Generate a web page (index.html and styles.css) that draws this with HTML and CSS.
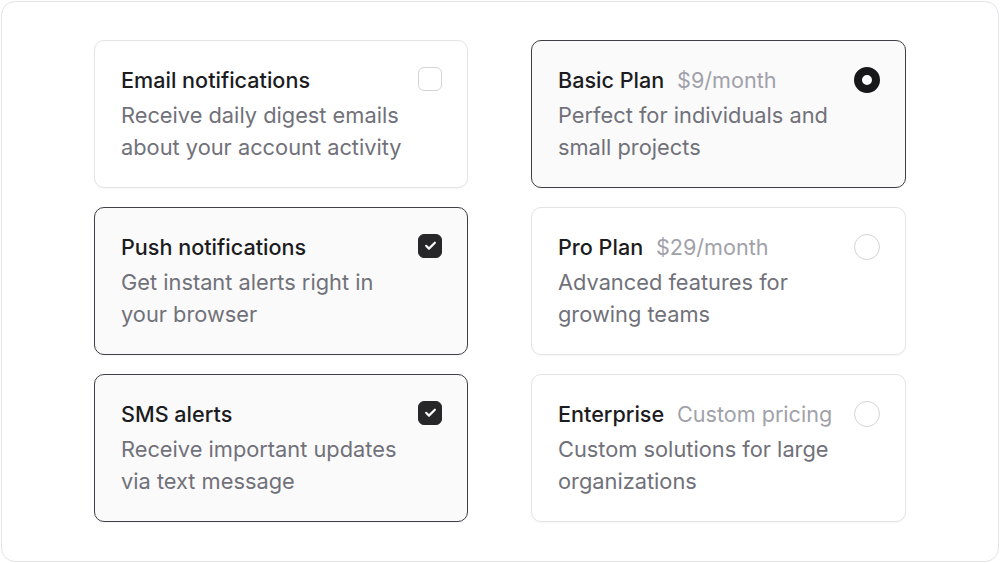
FILE: index.html
```html
<!DOCTYPE html>
<html>
<head>
<meta charset="utf-8">
<link rel="stylesheet" href="styles.css">
</head>
<body>
<div class="frame">
  <div class="grid">
    <div class="card">
      <div class="body">
        <div class="title">Email notifications</div>
        <div class="desc">Receive daily digest emails about your account activity</div>
      </div>
      <span class="check"></span>
    </div>
    <div class="card on">
      <div class="body">
        <div class="title">Basic Plan <span class="price">$9/month</span></div>
        <div class="desc">Perfect for individuals and small projects</div>
      </div>
      <span class="radio on"></span>
    </div>
    <div class="card on">
      <div class="body">
        <div class="title">Push notifications</div>
        <div class="desc">Get instant alerts right in your browser</div>
      </div>
      <span class="check on"><svg viewBox="0 0 24 24" width="15" height="15"><path d="M5 12.5l4.5 4.5L19 7.5" fill="none" stroke="#fff" stroke-width="3.4" stroke-linecap="round" stroke-linejoin="round"/></svg></span>
    </div>
    <div class="card">
      <div class="body">
        <div class="title">Pro Plan <span class="price">$29/month</span></div>
        <div class="desc">Advanced features for growing teams</div>
      </div>
      <span class="radio"></span>
    </div>
    <div class="card on">
      <div class="body">
        <div class="title">SMS alerts</div>
        <div class="desc">Receive important updates via text message</div>
      </div>
      <span class="check on"><svg viewBox="0 0 24 24" width="15" height="15"><path d="M5 12.5l4.5 4.5L19 7.5" fill="none" stroke="#fff" stroke-width="3.4" stroke-linecap="round" stroke-linejoin="round"/></svg></span>
    </div>
    <div class="card">
      <div class="body">
        <div class="title">Enterprise <span class="price">Custom pricing</span></div>
        <div class="desc">Custom solutions for large organizations</div>
      </div>
      <span class="radio"></span>
    </div>
  </div>
</div>
</body>
</html>
```

FILE: styles.css
```css
* { box-sizing: border-box; }
html, body { margin: 0; padding: 0; background: #fff; }
body {
  font-family: Inter, "Noto Sans", sans-serif;
  padding: 1px;
  width: 1000px;
  height: 563px;
}
.frame {
  width: 998px;
  height: 561px;
  border: 1px solid #e4e4e7;
  border-radius: 14px;
  display: flex;
  align-items: center;
  justify-content: center;
}
.grid {
  display: grid;
  grid-template-columns: 374px 375px;
  grid-auto-rows: 148px;
  column-gap: 63px;
  row-gap: 19px;
  margin-top: -2px;
}
.card {
  border: 1px solid #e4e4e7;
  border-radius: 10px;
  background: #fff;
  padding: 23px 25px 22px 26px;
  display: flex;
  justify-content: space-between;
  align-items: flex-start;
  box-shadow: 0 1px 2px rgba(0,0,0,0.04);
}
.card.on {
  border-color: #3f3f46;
  background: #fafafa;
}
.title {
  font-size: 21.6px;
  line-height: 32px;
  font-weight: 500;
  color: #1c1c1f;
}
.price {
  font-weight: 400;
  color: #a1a1aa;
  margin-left: 7px;
}
.desc {
  margin-top: 3px;
  font-size: 21.8px;
  line-height: 32px;
  color: #71717a;
  max-width: 292px;
}
.check {
  flex: none;
  width: 24px;
  height: 24px;
  margin-top: 3px;
  border: 1.5px solid #d4d4d8;
  border-radius: 6px;
  background: #fff;
  display: flex;
  align-items: center;
  justify-content: center;
}
.check.on {
  background: #27272a;
  border-color: #27272a;
}
.radio {
  flex: none;
  width: 26px;
  height: 26px;
  margin-top: 3px;
  border: 1.5px solid #d4d4d8;
  border-radius: 50%;
  background: #fff;
}
.radio.on {
  border: 8px solid #18181b;
}
```
